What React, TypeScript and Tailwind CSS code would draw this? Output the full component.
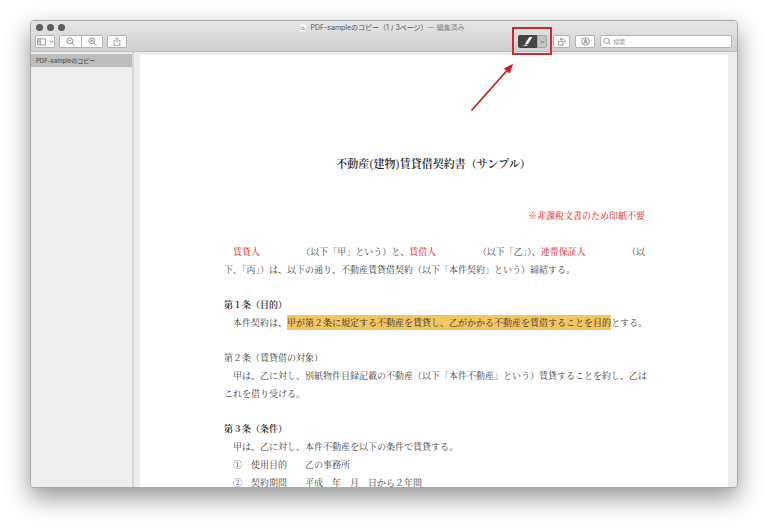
import type { ReactNode } from "react";

const RED = "font-medium text-[#e0382c]";

const toolButton =
  "flex h-[13px] items-center justify-center rounded-xs border border-[#b2b2b2] bg-[#fbfbfb] text-[#777]";

const Chevron = () => (
  <svg viewBox="0 0 6 4" className="h-[4px] w-[5px]" fill="none" stroke="currentColor">
    <path d="M0.8 0.8 3 3l2.2-2.2" />
  </svg>
);

const Magnifier = ({ plus, minus }: { plus?: boolean; minus?: boolean }) => (
  <svg viewBox="0 0 9 9" className="size-[9px]" fill="none" stroke="currentColor" strokeWidth="0.8">
    <circle cx="3.8" cy="3.8" r="2.9" />
    <path d="M6 6l2.4 2.4" />
    {(plus || minus) && <path d="M2.4 3.8h2.8" />}
    {plus && <path d="M3.8 2.4v2.8" />}
  </svg>
);

const TitleBar = () => (
  <div className="flex h-[13px] items-center">
    <div className="flex flex-1 gap-1 pl-[5px]">
      <button aria-label="閉じる" className="size-[7px] rounded-full bg-[#5d5d5d]" />
      <button aria-label="しまう" className="size-[7px] rounded-full bg-[#5d5d5d]" />
      <button aria-label="拡大" className="size-[7px] rounded-full bg-[#5d5d5d]" />
    </div>
    <h1 className="flex items-center text-[7px] leading-[13px] whitespace-nowrap text-[#555]">
      <svg viewBox="0 0 7 8" className="mr-[3px] h-[8px] w-[7px]">
        <path d="M0.5 0.3h4.2l1.8 1.8v5.6h-6z" fill="#fff" stroke="#ccc" strokeWidth="0.3" />
        <circle cx="3" cy="4.3" r="1.3" fill="none" stroke="#777" strokeWidth="0.7" />
        <path d="M4 5.3l1.4 1.4" stroke="#777" strokeWidth="0.8" />
      </svg>
      PDF-sampleのコピー（1 / 3ページ）
      <span className="text-[#888]">— 編集済み</span>
    </h1>
    <div className="flex-1 pl-2" />
  </div>
);

const HighlightControl = () => (
  <div className="relative mr-[6px] flex h-[13px] w-[29px]">
    <button aria-label="ハイライト" className="flex w-[19px] items-center justify-center rounded-l-xs bg-[#454545]">
      <svg viewBox="0 0 12 11" className="h-[11px] w-[12px]">
        <path d="M7.4 1h3L6.3 7.4 3.2 9 3.6 6.8z" fill="#fff" />
        <path d="M1.6 9.6h4" stroke="#fff" strokeWidth="0.8" />
      </svg>
    </button>
    <button
      aria-label="ハイライトの色"
      className="flex w-[10px] items-center justify-center rounded-r-xs border border-[#a3a3a3] bg-[#c4c4c4] text-[#555]"
    >
      <Chevron />
    </button>

    {/* callout frame and arrow */}
    <div className="pointer-events-none absolute -top-2 -left-[6px] z-10 h-[28px] w-[40px] border-2 border-[#cb2a30]" />
    <svg
      viewBox="0 0 44 50"
      className="pointer-events-none absolute top-[28px] -left-[48px] z-10 h-[50px] w-[44px]"
    >
      <path d="M1.5 47.5 37 7.5" stroke="#b5262b" strokeWidth="1.8" />
      <path d="M42.5 1.5 34.5 5.5 39.5 10z" fill="#cc1a20" stroke="#cc1a20" strokeWidth="0.8" />
    </svg>
  </div>
);

const Toolbar = () => (
  <div className="flex items-center pt-px pr-[5px] pl-[4px]">
    <button aria-label="サイドバー" className={`${toolButton} w-[20px] gap-[3px]`}>
      <svg viewBox="0 0 9 8" className="h-[8px] w-[9px]" fill="none" stroke="currentColor" strokeWidth="0.7">
        <path d="M0.5 0.8h8v6.2h-8zM3.3 0.8V7M1.3 2.3h1.2M1.3 3.6h1.2M1.3 4.9h1.2" />
      </svg>
      <Chevron />
    </button>
    <div className="ml-1 flex">
      <button aria-label="縮小" className={`${toolButton} w-[23px] rounded-r-none`}>
        <Magnifier minus />
      </button>
      <button aria-label="拡大表示" className={`${toolButton} w-[21px] rounded-l-none border-l-0`}>
        <Magnifier plus />
      </button>
    </div>
    <button aria-label="共有" className={`${toolButton} ml-1 w-[20px]`}>
      <svg viewBox="0 0 8 10" className="h-[9px] w-[8px]" fill="none" stroke="currentColor" strokeWidth="0.7">
        <path d="M2.6 3.8H0.8v5.4h6.4V3.8H5.4M4 6.3V0.8M2.4 2.4 4 0.8l1.6 1.6" />
      </svg>
    </button>

    <div className="flex-1" />

    <HighlightControl />
    <button aria-label="回転" className={`${toolButton} w-[17px]`}>
      <svg viewBox="0 0 10 10" className="h-[9px] w-[10px]" fill="none" stroke="currentColor" strokeWidth="0.8">
        <path d="M1 5h5.2v4H1zM3.4 2.4c3-0.8 5.4 1 5.3 4.4M4.8 0.8 3 2.4l2 1.4" />
      </svg>
    </button>
    <button aria-label="マークアップ" className={`${toolButton} ml-[5px] w-[20px]`}>
      <svg viewBox="0 0 10 10" className="size-[9px]" fill="none" stroke="currentColor" strokeWidth="0.8">
        <circle cx="5" cy="5" r="4.2" />
        <path d="M3 7.8 5 2.2l2 5.6M3.8 6h2.4M5 2.4v2.2" />
      </svg>
    </button>
    <label className="ml-[5px] flex h-[13px] w-[132px] items-center rounded-xs border border-[#b2b2b2] bg-white pl-[2px] text-[#777]">
      <Magnifier />
      <input
        type="search"
        aria-label="検索"
        placeholder="検索"
        className="ml-[2px] w-full min-w-0 bg-transparent text-[6px] leading-[11px] outline-none placeholder:text-[#999]"
      />
    </label>
  </div>
);

const Clause = ({ title, bold, children }: { title: string; bold?: boolean; children: ReactNode }) => (
  <section className="mt-[17px]">
    <h3 className={bold ? "font-semibold text-[#222]" : ""}>{title}</h3>
    {children}
  </section>
);

const Contract = () => (
  <article className="min-h-full bg-white pt-[99px] pr-[80px] pl-[84px] font-['Noto_Serif_CJK_JP','Noto_Sans_CJK_JP',serif] text-[9px] leading-[18px] text-[#3a3a3a]">
    <h2 className="pr-[5px] text-center text-[11px] font-semibold text-[#222]">
      不動産(建物)賃貸借契約書（サンプル）
    </h2>
    <p className={`mt-[35px] pr-[3px] text-right ${RED}`}>※非課税文書のため印紙不要</p>

    <div className="mt-[18px]">
      <p className="flex justify-between pr-[3px] pl-[9px] whitespace-nowrap">
        <span className={RED}>賃貸人</span>
        <span>
          （以下「甲」という）と、<span className={RED}>賃借人</span>
        </span>
        <span>
          （以下「乙」）、<span className={RED}>連帯保証人</span>
        </span>
        <span>（以</span>
      </p>
      <p>下、「丙」）は、以下の通り、不動産賃貸借契約（以下「本件契約」という）締結する。</p>
    </div>

    <Clause title="第１条（目的）" bold>
      <p className="indent-[9px]">
        本件契約は、
        <mark className="bg-[#f2c660] py-px text-[#2f2f2f]">
          甲が第２条に規定する不動産を賃貸し、乙がかかる不動産を賃借することを目的
        </mark>
        とする。
      </p>
    </Clause>

    <Clause title="第２条（賃貸借の対象）">
      <p className="indent-[9px]">
        甲は、乙に対し、別紙物件目録記載の不動産（以下「本件不動産」という）賃貸することを約し、乙はこれを借り受ける。
      </p>
    </Clause>

    <Clause title="第３条（条件）" bold>
      <p className="indent-[9px]">甲は、乙に対し、本件不動産を以下の条件で賃貸する。</p>
      <p className="indent-[9px]">①　使用目的　　乙の事務所</p>
      <p className="indent-[9px]">②　契約期間　　平成　年　月　日から２年間</p>
    </Clause>
  </article>
);

export default function App() {
  return (
    <div className="flex h-screen bg-white px-[30px] pt-5 pb-[40px] font-['Inter','Noto_Sans_CJK_JP',sans-serif]">
      <div className="flex min-w-0 flex-1 flex-col overflow-hidden rounded-[4px] border border-[#a9a9a9] bg-[#ececec] shadow-[0_10px_24px_rgba(0,0,0,0.42)]">
        <header className="h-[31px] shrink-0 border-b border-[#bdbdbd] bg-linear-to-b from-[#e6e6e6] to-[#d0d0d0]">
          <TitleBar />
          <Toolbar />
        </header>
        <div className="flex min-h-0 flex-1">
          <aside className="w-[103px] shrink-0 border-r-2 border-[#d6d6d6] bg-[#eeeeee] pt-[2px]">
            <a
              href="#document"
              className="block h-[13px] bg-[#bdbdbd] pl-[5px] text-[6px] leading-[13px] font-medium whitespace-nowrap text-[#555]"
            >
              PDF-sampleのコピー
            </a>
          </aside>
          <main id="document" className="min-w-0 flex-1 overflow-hidden pt-[3px] pr-[9px] pl-[6px]">
            <Contract />
          </main>
        </div>
      </div>
    </div>
  );
}
